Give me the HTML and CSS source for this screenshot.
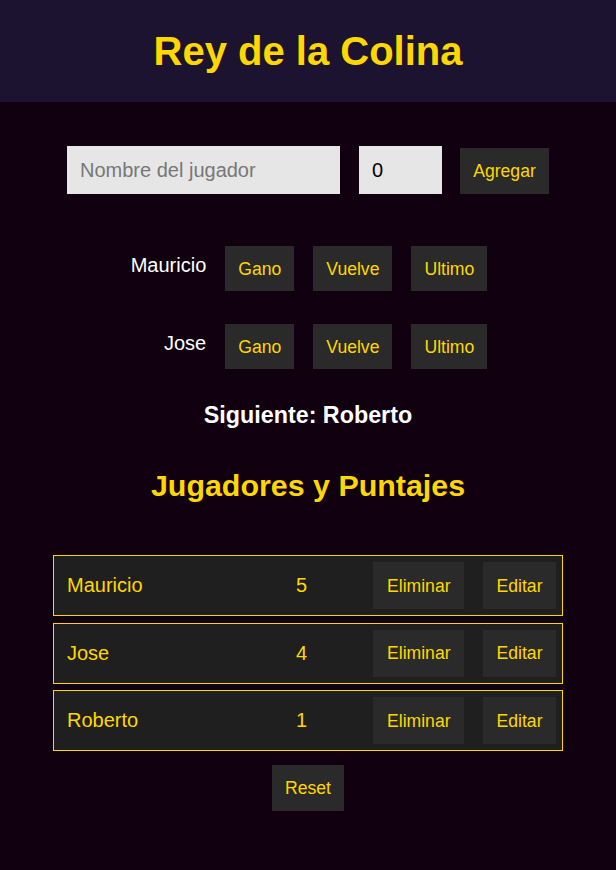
FILE: index.html
```html
<!DOCTYPE html>
<html lang="es">
<head>
<meta charset="utf-8">
<title>Rey de la Colina</title>
<link rel="stylesheet" href="styles.css">
</head>
<body>
<header class="top">
  <h1 class="title">Rey de la Colina</h1>
</header>
<main class="main">
  <div class="add-row">
    <input class="name-input" type="text" placeholder="Nombre del jugador">
    <input class="num-input" type="text" value="0">
    <button class="btn">Agregar</button>
  </div>
  <div class="players">
    <span class="plabel">Mauricio</span>
    <button class="btn">Gano</button>
    <button class="btn">Vuelve</button>
    <button class="btn">Ultimo</button>
    <span class="plabel">Jose</span>
    <button class="btn">Gano</button>
    <button class="btn">Vuelve</button>
    <button class="btn">Ultimo</button>
  </div>
  <p class="next">Siguiente: Roberto</p>
  <h2 class="subtitle">Jugadores y Puntajes</h2>
  <ul class="list">
    <li class="item"><span class="iname">Mauricio</span><span class="iscore">5</span><span class="iactions"><button class="btn">Eliminar</button><button class="btn">Editar</button></span></li>
    <li class="item"><span class="iname">Jose</span><span class="iscore">4</span><span class="iactions"><button class="btn">Eliminar</button><button class="btn">Editar</button></span></li>
    <li class="item"><span class="iname">Roberto</span><span class="iscore">1</span><span class="iactions"><button class="btn">Eliminar</button><button class="btn">Editar</button></span></li>
  </ul>
  <div class="reset-row"><button class="btn">Reset</button></div>
</main>
</body>
</html>
```
FILE: styles.css
```css
* { box-sizing: border-box; }
html, body {
  margin: 0;
  padding: 0;
  background: #100010;
  font-family: "Liberation Sans", Arial, sans-serif;
  min-height: 870px;
}
.top {
  height: 102px;
  background: #1b1330;
  display: flex;
  align-items: center;
  justify-content: center;
}
.title {
  margin: 0;
  font-size: 40px;
  font-weight: bold;
  color: #ffd700;
  line-height: 46px;
}
.main {
  padding-top: 44px;
}
.btn {
  background: #2a2a2a;
  color: #ffd700;
  border: none;
  font-family: "Liberation Sans", Arial, sans-serif;
  font-size: 17.6px;
  line-height: 20px;
  padding: 13px 13px;
  height: 46px;
  cursor: pointer;
}
.add-row {
  display: flex;
  justify-content: center;
  align-items: flex-end;
}
.name-input, .num-input {
  height: 48px;
  border: none;
  background: #e6e6e6;
  font-family: "Liberation Sans", Arial, sans-serif;
  font-size: 20px;
  padding: 0 13px;
  color: #000;
  outline: none;
}
.name-input::placeholder { color: #777; }
.name-input { width: 273px; margin-right: 19px; }
.num-input { width: 83px; margin-right: 18px; }
.add-row .btn { width: 89px; padding: 13px 0; }
.players {
  margin-top: 52px;
  padding-left: 2px;
  display: grid;
  grid-template-columns: repeat(4, auto);
  justify-content: center;
  column-gap: 19px;
  row-gap: 33px;
  align-items: center;
}
.players .btn { height: 45px; padding: 12px 13px; }
.plabel {
  justify-self: end;
  color: #fff;
  font-size: 20px;
  padding-bottom: 7px;
}
.next {
  margin: 33px 0 0;
  text-align: center;
  color: #fff;
  font-weight: bold;
  font-size: 23.3px;
  line-height: 27px;
}
.subtitle {
  margin: 39px 0 0;
  text-align: center;
  color: #ffd700;
  font-weight: bold;
  font-size: 30.4px;
  line-height: 35px;
}
.list {
  list-style: none;
  margin: 52px auto 0;
  padding: 0;
  width: 510px;
  display: flex;
  flex-direction: column;
  gap: 6.5px;
}
.item {
  display: flex;
  align-items: center;
  border: 1px solid #ffd700;
  background: #1f1f1f;
  padding: 6px 6px 6px 13px;
  color: #ffd700;
  font-size: 20px;
}
.iname { flex: 1; }
.iscore {
  width: 40px;
  text-align: center;
  margin-right: 52px;
}
.iactions {
  display: flex;
  gap: 19px;
}
.iactions .btn { height: 47px; padding: 13px 13.5px; }
.reset-row {
  display: flex;
  justify-content: center;
  margin-top: 14px;
}
.reset-row .btn { width: 72px; padding: 13px 0; }
```
